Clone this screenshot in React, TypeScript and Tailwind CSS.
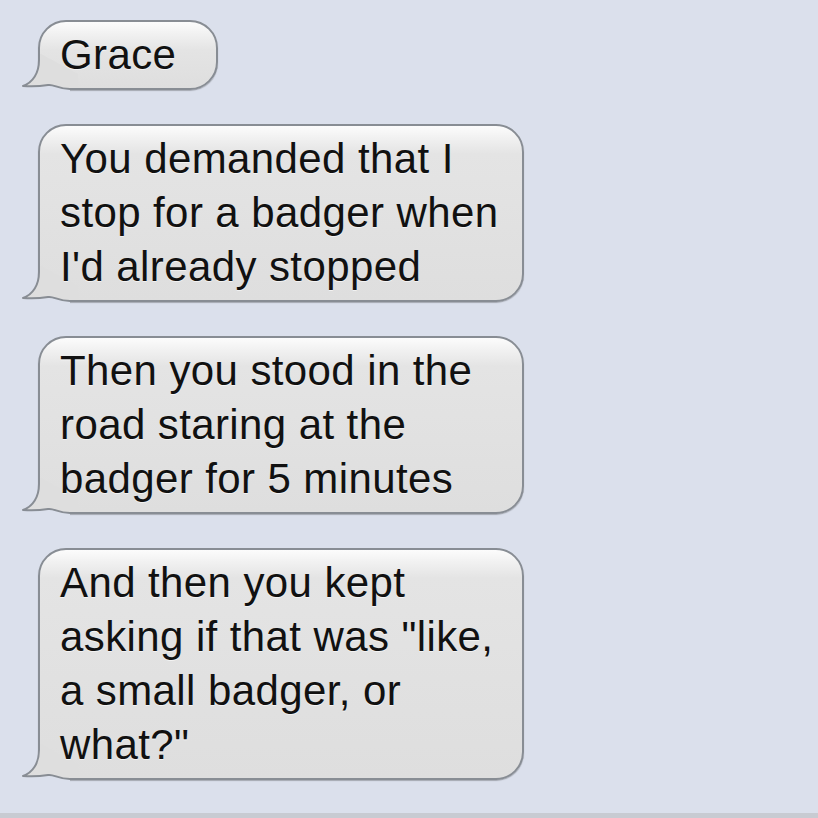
const messages = [
  { text: 'Grace', width: 'w-[180px]' },
  { text: "You demanded that I stop for a badger when I'd already stopped", width: 'w-[486px]' },
  { text: 'Then you stood in the road staring at the badger for 5 minutes', width: 'w-[486px]' },
  { text: 'And then you kept asking if that was "like, a small badger, or what?"', width: 'w-[486px]' },
];

function Tail() {
  const edge = 'M17 0 L17 6 C17 19 11 28.5 1 32 Q14 33 26 31 C32 30 36 35 48 35 L56 35';
  return (
    <svg
      className="absolute left-[-18px] bottom-[-4px]"
      width="56"
      height="38"
      viewBox="0 0 56 38"
    >
      <path d="M1 32 Q14 33 26 31 C32 30 36 35 48 35 L48 38 L0 38 L0 32 Z" fill="#dbe0ec" />
      <path d={edge + ' L56 20 L19 0 Z'} fill="#dedede" />
      <path d={edge} fill="none" stroke="#888d94" strokeWidth="2" strokeLinejoin="round" />
    </svg>
  );
}

function Bubble({ text, width }: { text: string; width: string }) {
  return (
    <div
      className={`relative ${width} rounded-[28px] border-2 border-[#888d94] bg-[linear-gradient(to_bottom,#fcfcfc_0px,#f1f1f1_12px,#e4e4e4_28px,#dedede_100%)] shadow-[0_1px_1px_rgba(0,0,0,0.25)] pl-[20px] pr-[12px] py-[6px]`}
    >
      <Tail />
      <p className="relative text-[42px] leading-[54px] tracking-[0.4px] text-[#111111] [text-shadow:0_1px_0_rgba(255,255,255,0.6)]">
        {text}
      </p>
    </div>
  );
}

export default function App() {
  return (
    <div className="flex h-[818px] w-[818px] flex-col bg-[#dbe0ec] font-['Liberation_Sans',Arial,sans-serif]">
      <div className="flex flex-col items-start gap-[34px] pl-[38px] pt-[20px]">
        {messages.map((m) => (
          <Bubble key={m.text} text={m.text} width={m.width} />
        ))}
      </div>
      <div className="mt-auto h-[5px] bg-[#c8cbd2]" />
    </div>
  );
}
